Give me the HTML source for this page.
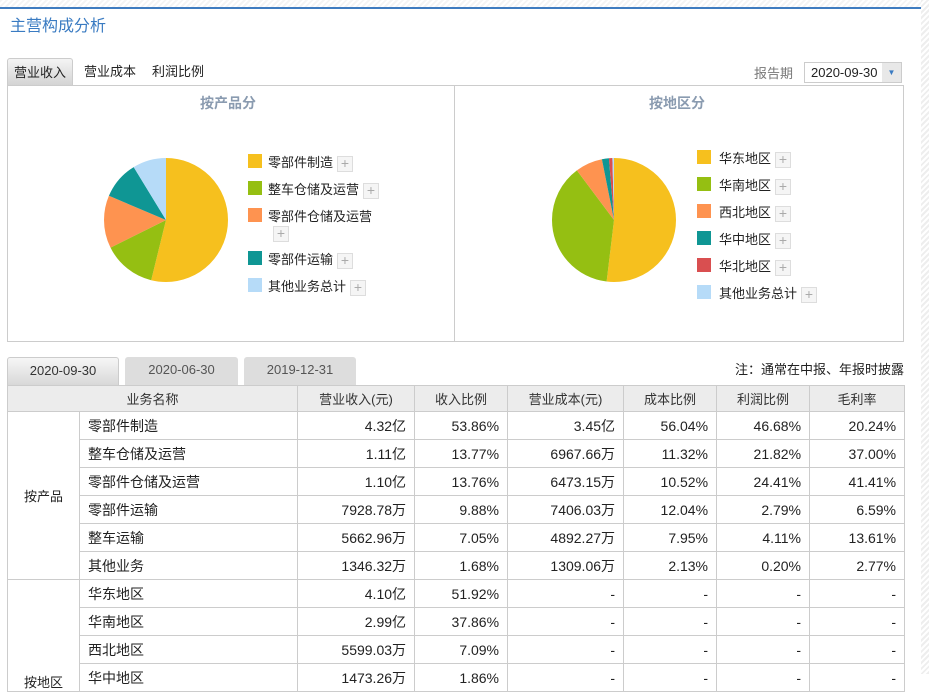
<!DOCTYPE html>
<html><head><meta charset="utf-8"><style>
body{margin:0;width:929px;height:674px;overflow:hidden;background:#fff;font-family:"Liberation Sans","Noto Sans CJK SC",sans-serif;position:relative}
.a{position:absolute}
.top{left:0;top:0;width:929px;height:7px;background:repeating-linear-gradient(135deg,#f4f4f4 0 2px,#fff 2px 4px)}
.bl{left:0;top:7px;width:921px;height:2px;background:#3f7cc0}
.sb{left:921px;top:0;width:8px;height:674px;background:repeating-linear-gradient(135deg,#eee 0 2px,#fff 2px 4px)}
.title{left:10px;top:12px;font-size:16px;color:#3a7bc2}
.tab{top:58px;height:27px;line-height:28px;font-size:13px;color:#222}
.box{left:7px;top:85px;width:895px;height:255px;border:1px solid #ccc}
.ht{font-size:14px;font-weight:bold;color:#8a9bb0;top:93px}
.lg{font-size:13px;color:#222}
.sw{position:absolute;width:14px;height:14px}
.pl{display:inline-block;width:14px;height:14px;border:1px solid #ddd;background:#f5f5f5;color:#aaa;font-size:14px;line-height:13px;text-align:center;vertical-align:middle;margin-left:4px}
table{position:absolute;left:7px;top:385px;border-collapse:collapse;font-size:14px;color:#222;table-layout:fixed;width:897px}
td{border:1px solid #ccc;height:28px;padding:0 8px;white-space:nowrap;box-sizing:border-box}
tr{height:28px}
th{border:1px solid #ccc;background:#ececec;font-weight:normal;font-size:13px;height:26px;padding:0;box-sizing:border-box;color:#333}
td.r{text-align:right}
.dt{top:357px;height:28px;line-height:26px;font-size:13px;text-align:center;color:#555;border-radius:3px 3px 0 0;background:#ddd}
</style></head><body>
<div class="a top"></div><div class="a bl"></div><div class="a sb"></div>
<div class="a title">主营构成分析</div>
<div class="a tab" style="left:7px;width:66px;text-align:center;background:linear-gradient(#f4f4f4,#d4d4d4);border:1px solid #ccc;border-bottom:none;border-radius:3px 3px 0 0;box-sizing:border-box">营业收入</div>
<div class="a tab" style="left:84px">营业成本</div>
<div class="a tab" style="left:152px">利润比例</div>
<div class="a" style="left:754px;top:63px;font-size:13px;color:#777">报告期</div>
<div class="a" style="left:804px;top:62px;width:98px;height:21px;border:1px solid #ccc;font-size:13px;line-height:20px;color:#222;box-sizing:border-box;padding-left:6px">2020-09-30<span style="position:absolute;right:0;top:0;width:19px;height:19px;background:#e8e8e8;color:#3a7bc2;font-size:8px;text-align:center;line-height:19px">▼</span></div>
<div class="a box"></div>
<div class="a" style="left:454px;top:86px;width:1px;height:255px;background:#ccc"></div>
<div class="a ht" style="left:200px">按产品分</div>
<div class="a ht" style="left:649px">按地区分</div>
<svg class="a" style="left:103px;top:157px" width="126" height="126" viewBox="0 0 126 126">
<g transform="rotate(-90 63 63)" fill="none" stroke-width="62">
<circle cx="63" cy="63" r="31" pathLength="100" stroke="#f6c01e" stroke-dasharray="53.86 100"/>
<circle cx="63" cy="63" r="31" pathLength="100" stroke="#95bf12" stroke-dasharray="0 53.86 13.77 100"/>
<circle cx="63" cy="63" r="31" pathLength="100" stroke="#fe9350" stroke-dasharray="0 67.63 13.76 100"/>
<circle cx="63" cy="63" r="31" pathLength="100" stroke="#0f9694" stroke-dasharray="0 81.39 9.88 100"/>
<circle cx="63" cy="63" r="31" pathLength="100" stroke="#b6dbf8" stroke-dasharray="0 91.27 8.73 100"/>
</g></svg>
<svg class="a" style="left:551px;top:157px" width="126" height="126" viewBox="0 0 126 126">
<g transform="rotate(-90 63 63)" fill="none" stroke-width="62">
<circle cx="63" cy="63" r="31" pathLength="100" stroke="#f6c01e" stroke-dasharray="51.92 100"/>
<circle cx="63" cy="63" r="31" pathLength="100" stroke="#95bf12" stroke-dasharray="0 51.92 37.86 100"/>
<circle cx="63" cy="63" r="31" pathLength="100" stroke="#fe9350" stroke-dasharray="0 89.78 7.09 100"/>
<circle cx="63" cy="63" r="31" pathLength="100" stroke="#0f9694" stroke-dasharray="0 96.87 1.8 100"/>
<circle cx="63" cy="63" r="31" pathLength="100" stroke="#d94f50" stroke-dasharray="0 98.67 0.9 100"/>
<circle cx="63" cy="63" r="31" pathLength="100" stroke="#b6dbf8" stroke-dasharray="0 99.57 0.43 100"/>
</g></svg>
<div class="a lg" style="left:248px;top:152px;width:140px">
<div style="position:relative;height:27px"><i class="sw" style="background:#f6c01e;top:2px"></i><span style="margin-left:20px">零部件制造</span><span class="pl">+</span></div>
<div style="position:relative;height:27px"><i class="sw" style="background:#95bf12;top:2px"></i><span style="margin-left:20px">整车仓储及运营</span><span class="pl">+</span></div>
<div style="position:relative;height:43px"><i class="sw" style="background:#fe9350;top:2px"></i><span style="margin-left:20px">零部件仓储及运营</span><br><span class="pl" style="margin-left:25px">+</span></div>
<div style="position:relative;height:27px"><i class="sw" style="background:#0f9694;top:2px"></i><span style="margin-left:20px">零部件运输</span><span class="pl">+</span></div>
<div style="position:relative;height:27px"><i class="sw" style="background:#b6dbf8;top:2px"></i><span style="margin-left:20px">其他业务总计</span><span class="pl">+</span></div>
</div>
<div class="a lg" style="left:697px;top:148px;width:140px">
<div style="position:relative;height:27px"><i class="sw" style="background:#f6c01e;top:2px"></i><span style="margin-left:22px">华东地区</span><span class="pl">+</span></div>
<div style="position:relative;height:27px"><i class="sw" style="background:#95bf12;top:2px"></i><span style="margin-left:22px">华南地区</span><span class="pl">+</span></div>
<div style="position:relative;height:27px"><i class="sw" style="background:#fe9350;top:2px"></i><span style="margin-left:22px">西北地区</span><span class="pl">+</span></div>
<div style="position:relative;height:27px"><i class="sw" style="background:#0f9694;top:2px"></i><span style="margin-left:22px">华中地区</span><span class="pl">+</span></div>
<div style="position:relative;height:27px"><i class="sw" style="background:#d94f50;top:2px"></i><span style="margin-left:22px">华北地区</span><span class="pl">+</span></div>
<div style="position:relative;height:27px"><i class="sw" style="background:#b6dbf8;top:2px"></i><span style="margin-left:22px">其他业务总计</span><span class="pl">+</span></div>
</div>
<div class="a dt" style="left:7px;width:112px;background:linear-gradient(#f6f6f6,#d8d8d8);border:1px solid #ccc;border-bottom:none;box-sizing:border-box;color:#333">2020-09-30</div>
<div class="a dt" style="left:125px;width:113px">2020-06-30</div>
<div class="a dt" style="left:244px;width:112px">2019-12-31</div>
<div class="a" style="left:735px;top:359px;font-size:13px;color:#222">注：通常在中报、年报时披露</div>
<table>
<colgroup><col style="width:72px"><col style="width:218px"><col style="width:117px"><col style="width:93px"><col style="width:116px"><col style="width:93px"><col style="width:93px"><col style="width:95px"></colgroup>
<tr style="height:26px"><th colspan="2">业务名称</th><th>营业收入(元)</th><th>收入比例</th><th>营业成本(元)</th><th>成本比例</th><th>利润比例</th><th>毛利率</th></tr>
<tr><td rowspan="6" style="text-align:center;font-size:13px">按产品</td><td>零部件制造</td><td class="r">4.32亿</td><td class="r">53.86%</td><td class="r">3.45亿</td><td class="r">56.04%</td><td class="r">46.68%</td><td class="r">20.24%</td></tr>
<tr><td>整车仓储及运营</td><td class="r">1.11亿</td><td class="r">13.77%</td><td class="r">6967.66万</td><td class="r">11.32%</td><td class="r">21.82%</td><td class="r">37.00%</td></tr>
<tr><td>零部件仓储及运营</td><td class="r">1.10亿</td><td class="r">13.76%</td><td class="r">6473.15万</td><td class="r">10.52%</td><td class="r">24.41%</td><td class="r">41.41%</td></tr>
<tr><td>零部件运输</td><td class="r">7928.78万</td><td class="r">9.88%</td><td class="r">7406.03万</td><td class="r">12.04%</td><td class="r">2.79%</td><td class="r">6.59%</td></tr>
<tr><td>整车运输</td><td class="r">5662.96万</td><td class="r">7.05%</td><td class="r">4892.27万</td><td class="r">7.95%</td><td class="r">4.11%</td><td class="r">13.61%</td></tr>
<tr><td>其他业务</td><td class="r">1346.32万</td><td class="r">1.68%</td><td class="r">1309.06万</td><td class="r">2.13%</td><td class="r">0.20%</td><td class="r">2.77%</td></tr>
<tr><td rowspan="4" style="text-align:center;font-size:13px;vertical-align:bottom">按地区</td><td>华东地区</td><td class="r">4.10亿</td><td class="r">51.92%</td><td class="r">-</td><td class="r">-</td><td class="r">-</td><td class="r">-</td></tr>
<tr><td>华南地区</td><td class="r">2.99亿</td><td class="r">37.86%</td><td class="r">-</td><td class="r">-</td><td class="r">-</td><td class="r">-</td></tr>
<tr><td>西北地区</td><td class="r">5599.03万</td><td class="r">7.09%</td><td class="r">-</td><td class="r">-</td><td class="r">-</td><td class="r">-</td></tr>
<tr><td>华中地区</td><td class="r">1473.26万</td><td class="r">1.86%</td><td class="r">-</td><td class="r">-</td><td class="r">-</td><td class="r">-</td></tr>
</table>
</body></html>
